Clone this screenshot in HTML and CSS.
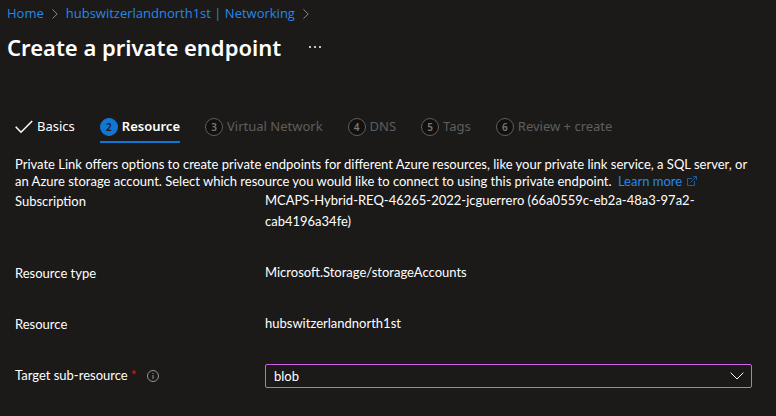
FILE: index.html
```html
<!DOCTYPE html>
<html lang="en">
<head>
<meta charset="utf-8">
<title>Create a private endpoint</title>
<link rel="stylesheet" href="styles.css">
</head>
<body>
<header class="header">
  <nav class="breadcrumb" aria-label="Breadcrumb">
    <a href="#">Home</a>
    <svg class="crumb-arrow" viewBox="0 0 6 10"><path d="M.5 .5 5.200 5 .5 9.500"/></svg>
    <a href="#">hubswitzerlandnorth1st | Networking</a>
    <svg class="crumb-arrow" viewBox="0 0 6 10"><path d="M.5 .5 5.200 5 .5 9.500"/></svg>
  </nav>
  <div class="title-row">
    <h1>Create a private endpoint</h1>
    <button class="more" type="button" aria-label="More actions"><svg viewBox="0 0 12 2"><path d="M0 0h2v2H0zM5 0h2v2H5zM10 0h2v2h-2z"/></svg></button>
  </div>
</header>
<main>
  <nav class="steps" aria-label="Steps">
    <a class="step done" href="#"><svg class="check" viewBox="0 0 18 14"><path d="M.7 6.700 6 12.200 17.200 1"/></svg>Basics</a>
    <a class="step active" href="#" aria-current="step"><span class="num">2</span>Resource</a>
    <a class="step" href="#"><span class="num">3</span>Virtual Network</a>
    <a class="step" href="#"><span class="num">4</span>DNS</a>
    <a class="step" href="#"><span class="num">5</span>Tags</a>
    <a class="step" href="#"><span class="num">6</span>Review + create</a>
  </nav>
  <p class="intro">Private Link offers options to create private endpoints for different Azure resources, like your private link service, a SQL server, or an Azure storage account. Select which resource you would like to connect to using this private endpoint. <a class="learn" href="#">Learn more<svg class="external" viewBox="0 0 10 10"><path d="M5 2.500H.5v7h7V5M3.500 6.500 9.500 .5M6 .5h3.500V4"/></svg></a></p>
  <form class="form">
    <span class="label">Subscription</span>
    <span class="value">MCAPS-Hybrid-REQ-46265-2022-jcguerrero (66a0559c-eb2a-48a3-97a2-cab4196a34fe)</span>
    <span class="label">Resource type</span>
    <span class="value">Microsoft.Storage/storageAccounts</span>
    <span class="label">Resource</span>
    <span class="value">hubswitzerlandnorth1st</span>
    <label class="label" for="target">Target sub-resource <span class="required">*</span><svg class="info" viewBox="0 0 12 12"><circle cx="6" cy="6" r="5.500"/><path d="M6 5v4M6 3v1"/></svg></label>
    <div class="picker">
      <select id="target"><option>blob</option></select>
      <svg class="chevron" viewBox="0 0 14 8"><path d="M.7 .7 7 7 13.300 .7"/></svg>
    </div>
  </form>
</main>
</body>
</html>
```
FILE: styles.css
```css
* { box-sizing: border-box; }
body {
  margin: 0;
  background: #1b1a19;
  color: #fff;
  font: 13px/17px "Segoe UI", "Open Sans", sans-serif;
}
a { color: #2488ea; text-decoration: none; }
svg { fill: none; stroke: currentColor; flex: none; }
.header { padding: 5px 7px 0; }
.breadcrumb { display: flex; align-items: center; gap: 8px; }
.crumb-arrow { width: 6px; height: 10px; color: #8a8886; }
.title-row { display: flex; align-items: center; gap: 28px; padding-top: 10px; }
h1 { margin: 0; font: 600 22px/30px "Segoe UI", "Noto Sans", sans-serif; }
.more { padding: 0; border: 0; background: none; color: #c8c6c4; display: flex; }
.more svg { width: 12px; height: 2px; fill: currentColor; stroke: none; }
main { padding: 52px 15px 0; }
.steps { display: flex; gap: 25px; font-family: "Segoe UI", "Noto Sans", sans-serif; }
.step { display: flex; align-items: center; gap: 4px; height: 29px; padding-bottom: 2px; color: #605e5c; border-bottom: 2px solid transparent; }
.done { color: #fff; }
.active { color: #fff; font-weight: 600; border-color: #1078d4; }
.num { width: 18px; height: 18px; border: 1px solid #605e5c; border-radius: 50%; background: #11100f; color: #797775; font-size: 10px; line-height: 16px; font-weight: 600; text-align: center; }
.active .num { background: #1078d4; border-color: #1078d4; color: #1b1a19; }
.check { width: 18px; height: 14px; stroke-width: 1.500; }
.intro { margin: 13px 0 0; font-family: "Segoe UI", Lato, sans-serif; }
.learn { margin-left: 3px; }
.external { width: 10px; height: 10px; margin-left: 5px; opacity: .6; }
.form { display: grid; grid-template-columns: 250px 1fr; padding-right: 9px; font-family: "Segoe UI", Lato, sans-serif; line-height: 21px; }
.label { padding-top: 1px; }
.value { padding-bottom: 30px; }
.required { color: #e81123; }
.info { width: 12px; height: 12px; margin-left: 10px; color: #979593; vertical-align: -2px; }
.picker { display: grid; align-items: center; }
.picker > * { grid-area: 1 / 1; }
select { appearance: none; width: 100%; height: 24px; padding: 0 8px; border: 1px solid #d15fee; border-radius: 2px; background: transparent; color: #fff; font: inherit; outline: 0; }
.chevron { width: 14px; height: 8px; justify-self: end; margin-right: 8px; pointer-events: none; }
```
